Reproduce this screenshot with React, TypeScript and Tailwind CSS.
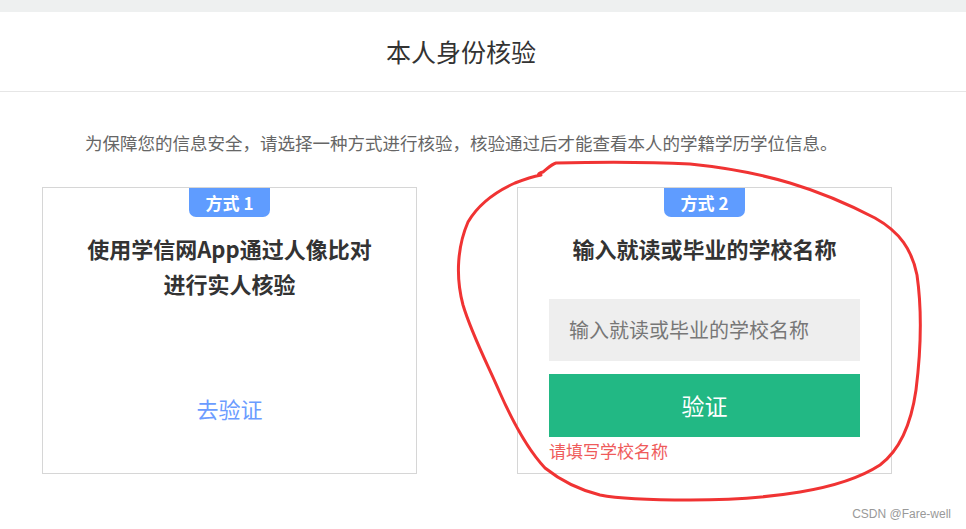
const cjk = { fontFamily: '"Microsoft YaHei", "Noto Sans CJK SC", "Noto Sans", sans-serif' };

function Badge({ n }: { n: number }) {
  return (
    <div className="mx-auto flex h-[29px] w-[81px] items-center justify-center rounded-b-[7px] bg-[#5f9cff] text-[17px] font-bold text-white">
      方式 {n}
    </div>
  );
}

export default function App() {
  return (
    <div className="relative h-[529px] w-full overflow-hidden bg-white" style={cjk}>
      <div className="h-[12px] bg-[#eef0f0]" />
      <header className="h-[80px] border-b border-[#e6e6e6]">
        <div className="flex h-full w-[922px] items-center justify-center">
          <h1 className="text-[25px] text-[#333]">本人身份核验</h1>
        </div>
      </header>

      <p className="mt-[38px] pl-[85px] text-[17.5px] leading-[26px] text-[#666]">
        为保障您的信息安全，请选择一种方式进行核验，核验通过后才能查看本人的学籍学历学位信息。
      </p>

      <div className="mt-[31px] flex gap-[100px] pl-[42px]">
        <div className="flex h-[287px] w-[375px] flex-col border border-[#d6d6d6]">
          <Badge n={1} />
          <h2 className="mt-[14px] text-center text-[22px] font-bold leading-[35px] text-[#333]">
            使用学信网App通过人像比对
            <br />
            进行实人核验
          </h2>
          <a className="mt-[92px] text-center text-[22px] leading-[30px] text-[#6b9cff]">去验证</a>
        </div>

        <div className="flex h-[287px] w-[375px] flex-col border border-[#d6d6d6]">
          <Badge n={2} />
          <h2 className="mt-[14px] text-center text-[22px] font-bold leading-[35px] text-[#333]">
            输入就读或毕业的学校名称
          </h2>
          <div className="mx-[31px] mt-[33px] flex h-[62px] items-center bg-[#eeeeee] px-[20px] text-[20px] text-[#777]">
            输入就读或毕业的学校名称
          </div>
          <button className="mx-[31px] mt-[13px] h-[63px] bg-[#22b884] text-[23px] text-white">验证</button>
          <p className="mx-[31px] mt-[3px] text-[17px] leading-[22px] text-[#ef5b5b]">请填写学校名称</p>
        </div>
      </div>

      <svg className="pointer-events-none absolute left-0 top-0" width="966" height="529">
        <path
          d="M543 172 C548 168 552 164 556 163 C600 162 650 162 690 164 C730 168 760 174 790 183 C820 192 850 205 875 218 C900 232 912 250 917 275 C922 310 921 350 916 390 C911 425 900 450 880 465 C860 478 830 487 800 492 C770 497 730 500 690 500 C650 500 620 499 600 495 C580 490 560 480 545 468 C528 450 512 420 500 393 C488 365 472 335 463 305 C455 275 458 245 468 222 C478 205 495 192 515 183 C528 178 536 176 541 175 C537 176 538 173 543 172"
          fill="none"
          stroke="#f03333"
          strokeWidth="3"
          strokeLinecap="round"
          strokeLinejoin="round"
        />
      </svg>

      <span
        className="absolute bottom-[6px] right-[15px] text-[12px] text-[#999]"
        style={{ fontFamily: '"Liberation Sans", Arial, sans-serif' }}
      >
        CSDN @Fare-well
      </span>
    </div>
  );
}
